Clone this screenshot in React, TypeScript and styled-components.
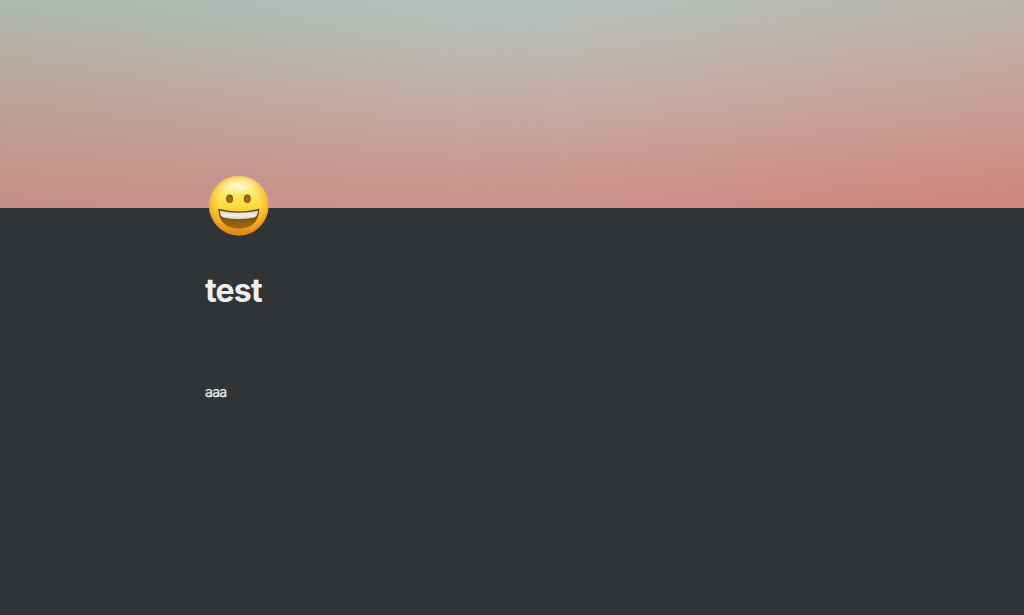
import React from 'react';
import styled, { createGlobalStyle } from 'styled-components';

const GlobalStyle = createGlobalStyle`
  body {
    margin: 0;
    background: #313436;
  }
`;

const Page = styled.div({
  minHeight: '100vh',
  backgroundColor: '#313436',
  color: '#efeff0',
  fontFamily: 'Inter, "Liberation Sans", sans-serif',
});

// the sunset is three vertical ramps, blended sideways with masks
const Cover = styled.div({
  display: 'grid',
  height: '208px',
  background: 'linear-gradient(#b6c2c0 0, #bbbdb8 36px, #c0b4af 76px, #c5aaa2 115px, #c99f97 155px, #cb9790 185px, #cc938c 208px)',
});

const CoverTint = styled.div<{ side: 'left' | 'right' }>(({ side }) => ({
  gridArea: '1 / 1',
  background: side === 'left'
    ? 'linear-gradient(#abb8b0 0, #b2b0a6 40px, #b8a79b 82px, #be9d93 130px, #c2948b 175px, #c68e86 208px)'
    : 'linear-gradient(#b8b6ad 0, #bfaea6 35px, #c3a59b 75px, #c99a92 125px, #cd8c84 170px, #cf847c 208px)',
  maskImage: `linear-gradient(to ${side === 'left' ? 'right' : 'left'}, #000, rgba(0, 0, 0, 0.7) 16%, rgba(0, 0, 0, 0.3) 34%, rgba(0, 0, 0, 0.08) 46%, transparent 54%)`,
}));

const Content = styled.main({
  display: 'flex',
  flexDirection: 'column',
  alignItems: 'flex-start',
  paddingLeft: '205px',
});

const PageIcon = styled.svg({
  position: 'relative',
  width: '62px',
  height: '62px',
  marginTop: '-33px',
  marginLeft: '3px',
});

const Title = styled.h1({
  margin: '34px 0 0',
  fontSize: '32px',
  lineHeight: '40px',
  fontWeight: 700,
  letterSpacing: '-0.8px',
});

const Paragraph = styled.p({
  margin: '71px 0 0',
  fontSize: '14px',
  lineHeight: '20px',
  letterSpacing: '-0.7px',
  WebkitTextStroke: '0.2px #efeff0',
});

const GrinningFace: React.FC = () => (
  <PageIcon viewBox="0 0 62 62" role="img" aria-label="grinning face">
    <defs>
      <linearGradient id="skin" x1="0" y1="0" x2="0" y2="1">
        <stop offset="0" stopColor="#fdf0a0" />
        <stop offset="0.25" stopColor="#fdec72" />
        <stop offset="0.5" stopColor="#fbdc3c" />
        <stop offset="0.78" stopColor="#eeb02a" />
        <stop offset="1" stopColor="#b96f14" />
      </linearGradient>
      <radialGradient id="rim" cy="0.47" r="0.53">
        <stop offset="0.62" stopColor="#f9ae22" stopOpacity="0" />
        <stop offset="0.86" stopColor="#f6a522" stopOpacity="0.5" />
        <stop offset="1" stopColor="#d98a1c" stopOpacity="0.85" />
      </radialGradient>
      <radialGradient id="shine">
        <stop offset="0" stopColor="#fff8dc" stopOpacity="0.95" />
        <stop offset="0.5" stopColor="#fff4b8" stopOpacity="0.65" />
        <stop offset="1" stopColor="#fff2a0" stopOpacity="0" />
      </radialGradient>
      <linearGradient id="mouth" x1="0" y1="0" x2="0" y2="1">
        <stop offset="0" stopColor="#633808" />
        <stop offset="0.55" stopColor="#8a560b" />
        <stop offset="1" stopColor="#a36a12" />
      </linearGradient>
      <linearGradient id="teeth" x1="0" y1="0" x2="0" y2="1">
        <stop offset="0" stopColor="#cfc8c5" />
        <stop offset="0.55" stopColor="#f1efee" />
        <stop offset="1" stopColor="#d8d2ce" />
      </linearGradient>
    </defs>
    <circle cx="30.8" cy="30.7" r="29.7" fill="url(#skin)" />
    <circle cx="30.8" cy="30.7" r="29.7" fill="url(#rim)" />
    <ellipse cx="30.8" cy="11" rx="20" ry="9.5" fill="url(#shine)" />
    <ellipse cx="21.6" cy="23.7" rx="3.5" ry="4.3" fill="#8f5a10" />
    <ellipse cx="39.3" cy="23.7" rx="3.5" ry="4.3" fill="#8f5a10" />
    <ellipse cx="21.6" cy="24.2" rx="2" ry="2.8" fill="#a26a20" />
    <ellipse cx="39.3" cy="24.2" rx="2" ry="2.8" fill="#a26a20" />
    <path
      d="M10.4 33.8Q30.8 39 51.2 33.8C51.4 46.2 43.4 53.6 30.8 53.6S10.2 46.2 10.4 33.8Z"
      fill="url(#mouth)"
    />
    <path
      d="M11.6 35.6Q30.8 40 50 35.6Q50 38.5 48.6 40.7Q47.8 42 46 42.4Q30.8 45.6 15.6 42.4Q13.8 42 13 40.7Q11.6 38.5 11.6 35.6Z"
      fill="url(#teeth)"
    />
  </PageIcon>
);

const App: React.FC = () => (
  <>
    <GlobalStyle />
    <Page>
      <Cover>
        <CoverTint side="left" />
        <CoverTint side="right" />
      </Cover>
      <Content>
        <GrinningFace />
        <Title>test</Title>
        <Paragraph>aaa</Paragraph>
      </Content>
    </Page>
  </>
);

export default App;
